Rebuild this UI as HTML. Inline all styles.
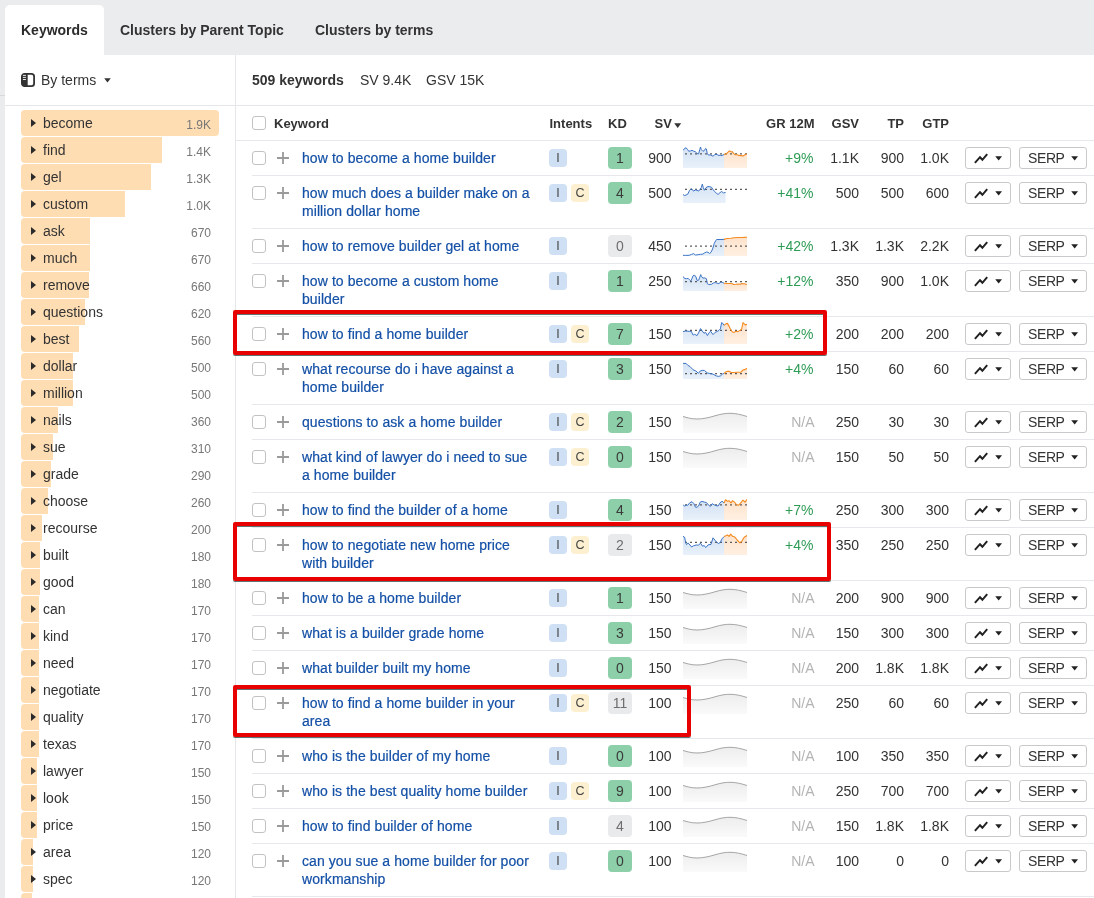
<!DOCTYPE html>
<html lang="en">
<head>
<meta charset="utf-8">
<title>Keywords</title>
<style>
html,body{margin:0;padding:0}
body{width:1094px;height:898px;position:relative;overflow:hidden;background:#ebecee;font-family:"Liberation Sans",sans-serif;font-size:14px;color:#333}
#app{position:absolute;left:0;top:0;width:1094px;height:898px;overflow:hidden;will-change:transform}
.topbar{position:absolute;left:0;top:0;width:1094px;height:55px;background:#ebecee}
.tab-active{position:absolute;left:5px;top:5px;width:99px;height:50px;background:#fff;border-radius:5px 5px 0 0;font-weight:bold;font-size:14px;line-height:50px;text-indent:16px;color:#2b2b2b}
.tab{position:absolute;top:5px;height:50px;line-height:50px;font-weight:bold;font-size:14px;color:#333;white-space:nowrap}
.t2{left:120px}.t3{left:315px}
.panel{position:absolute;left:5px;top:55px;width:1089px;height:843px;background:#fff}
.leftline{position:absolute;left:0;top:95px;width:5px;height:1px;background:#d8d9db}
.hline{position:absolute;left:5px;top:105px;width:1089px;height:1px;background:#e4e6e9}
.vline{position:absolute;left:235px;top:55px;width:1px;height:843px;background:#e4e6e9}
.byterms{position:absolute;left:21px;top:70px;height:20px;line-height:20px;white-space:nowrap}
.sbicon{position:absolute;left:0;top:3px}
.bt{position:absolute;left:20px;top:0}
.caret{position:absolute;left:82.8px;top:8.3px}
.sum{position:absolute;left:252px;top:70px;line-height:20px;white-space:nowrap}
.sum b{color:#333}
.sum .s1{position:absolute;left:108px}.sum .s2{position:absolute;left:174px}
.term{position:absolute;left:21px;width:198px;height:26px;line-height:26px}
.bar{position:absolute;left:0;top:0;height:26px;background:#ffddb3;border-radius:4px 0 0 4px}
.bar.full{border-radius:4px}
.tri{position:absolute;left:10px;top:9px;border-top:4px solid transparent;border-bottom:4px solid transparent;border-left:5.5px solid #2b2b2b}
.tn{position:absolute;left:22px;top:0;color:#333;white-space:nowrap}
.tv{position:absolute;right:8px;top:1.5px;font-size:12px;color:#777}
.thead{position:absolute;left:236px;top:106px;width:858px;height:34px}
.thead .h{position:absolute;top:1px;line-height:34px;font-weight:bold;font-size:13px;color:#333;white-space:nowrap}
.cb{position:absolute;left:16px;top:10px;width:12px;height:12px;border:1px solid #c2c2c2;border-radius:3px;background:#fff}
.hcb{top:10px}
.hk{left:38px}.hi{left:313.5px}.hkd{left:372px}.hsv{left:418.5px}
.svc{position:absolute;left:438.3px;top:16.6px}
.hgr{right:279.5px}.hgsv{right:235px}.htp{right:190px}.hgtp{right:145px}
.row{position:absolute;left:236px;width:858px;}
.row:before,.lastline{content:"";position:absolute;left:16px;right:0;top:-1px;height:1px;background:#e6e8eb}
.lastline{left:252px;top:896px}
.plus{position:absolute;left:41px;top:11px}
.kw{position:absolute;left:66px;top:8px;line-height:18px;color:#1450a6;-webkit-text-stroke:0.2px #1450a6;white-space:nowrap;letter-spacing:0.08px}
.int{position:absolute;top:8px;width:18px;height:18px;line-height:18px;border-radius:4px;text-align:center;font-size:12.5px;color:#444}
.int.i{left:313px;background:#cfe0f5}
.int.c{left:335px;background:#fdf0d0}
.kd{position:absolute;left:372px;top:6px;width:24px;height:22px;line-height:22px;border-radius:4px;text-align:center;font-size:14px;color:#3a3a3a}
.kd.g{background:#8ccfa8}
.kd.gy{background:#e9eaec;color:#6e6e6e}
.n{position:absolute;top:8px;line-height:18px;white-space:nowrap;color:#333}
.sv{right:422.5px}
.spark{position:absolute;left:447px;top:5px;width:64px;height:22px}
.gr{right:280.6px;color:#2e9c55}
.gr.na{color:#b4b4b4;right:279.5px}
.gsv{right:235px}.tp{right:190px}.gtp{right:145px}
.btn{position:absolute;top:6px;height:20px;border:1px solid #c9c9c9;border-radius:3px;background:#fff;line-height:20px;font-size:14px;color:#333;box-sizing:content-box}
.b1{left:729px;width:43.5px}
.b1 .ic{position:absolute;left:8px;top:5px}
.b2{left:783px;width:65.5px;text-indent:8px;letter-spacing:-0.4px}
.bc{position:absolute;right:7.5px;top:8.3px}
.red{position:absolute;border:4px solid #e80000;box-sizing:border-box;border-radius:2px;box-shadow:0 1px 0 rgba(55,80,80,0.8), inset 0 1px 0 rgba(55,80,80,0.8)}

.hbot{position:absolute;left:236px;top:140px;width:858px;height:1px;background:#e6e8eb}

</style>
</head>
<body>
<div id="app">
<svg width="0" height="0" style="position:absolute"><defs><linearGradient id="gb" x1="0" y1="0" x2="0" y2="1"><stop offset="0" stop-color="#d3e2f5"/><stop offset="1" stop-color="#e9f1fa"/></linearGradient><linearGradient id="go" x1="0" y1="0" x2="0" y2="1"><stop offset="0" stop-color="#fee2cb"/><stop offset="1" stop-color="#fff0e2"/></linearGradient><linearGradient id="gn" x1="0" y1="0" x2="0" y2="1"><stop offset="0" stop-color="#ededed"/><stop offset="1" stop-color="#fafafa"/></linearGradient></defs></svg>
<div class="topbar"></div>
<div class="tab-active">Keywords</div>
<div class="tab t2">Clusters by Parent Topic</div>
<div class="tab t3">Clusters by terms</div>
<div class="panel"></div>
<div class="leftline"></div>
<div class="hline"></div>
<div class="vline"></div>
<div class="byterms"><svg class="sbicon" width="14" height="14" viewBox="0 0 14 14"><rect x="0.9" y="0.9" width="12.2" height="12.2" rx="2.6" fill="none" stroke="#333" stroke-width="1.8"/><path d="M1 3 Q1 1 3 1 H6.7 V13 H3 Q1 13 1 11 Z" fill="#333"/><rect x="1.9" y="1.9" width="3" height="0.9" fill="#fff"/><rect x="1.9" y="3.9" width="3" height="0.9" fill="#fff"/><rect x="1.9" y="6" width="3" height="0.9" fill="#fff"/></svg><span class="bt">By terms</span><svg class="caret" width="7" height="4.6" viewBox="0 0 10 6" preserveAspectRatio="none"><path d="M0.3 0.2 H9.7 L5 6 Z" fill="#333"/></svg></div>
<div class="sum"><b>509 keywords</b><span class="s1">SV 9.4K</span><span class="s2">GSV 15K</span></div>
<div class="terms">
<div class="term" style="top:110px"><div class="bar full" style="width:198px"></div><span class="tri"></span><span class="tn">become</span><span class="tv">1.9K</span></div>
<div class="term" style="top:137px"><div class="bar" style="width:141px"></div><span class="tri"></span><span class="tn">find</span><span class="tv">1.4K</span></div>
<div class="term" style="top:164px"><div class="bar" style="width:130px"></div><span class="tri"></span><span class="tn">gel</span><span class="tv">1.3K</span></div>
<div class="term" style="top:191px"><div class="bar" style="width:104px"></div><span class="tri"></span><span class="tn">custom</span><span class="tv">1.0K</span></div>
<div class="term" style="top:218px"><div class="bar" style="width:69px"></div><span class="tri"></span><span class="tn">ask</span><span class="tv">670</span></div>
<div class="term" style="top:245px"><div class="bar" style="width:69px"></div><span class="tri"></span><span class="tn">much</span><span class="tv">670</span></div>
<div class="term" style="top:272px"><div class="bar" style="width:68px"></div><span class="tri"></span><span class="tn">remove</span><span class="tv">660</span></div>
<div class="term" style="top:299px"><div class="bar" style="width:64px"></div><span class="tri"></span><span class="tn">questions</span><span class="tv">620</span></div>
<div class="term" style="top:326px"><div class="bar" style="width:58px"></div><span class="tri"></span><span class="tn">best</span><span class="tv">560</span></div>
<div class="term" style="top:353px"><div class="bar" style="width:52px"></div><span class="tri"></span><span class="tn">dollar</span><span class="tv">500</span></div>
<div class="term" style="top:380px"><div class="bar" style="width:52px"></div><span class="tri"></span><span class="tn">million</span><span class="tv">500</span></div>
<div class="term" style="top:407px"><div class="bar" style="width:37px"></div><span class="tri"></span><span class="tn">nails</span><span class="tv">360</span></div>
<div class="term" style="top:434px"><div class="bar" style="width:32px"></div><span class="tri"></span><span class="tn">sue</span><span class="tv">310</span></div>
<div class="term" style="top:461px"><div class="bar" style="width:30px"></div><span class="tri"></span><span class="tn">grade</span><span class="tv">290</span></div>
<div class="term" style="top:488px"><div class="bar" style="width:27px"></div><span class="tri"></span><span class="tn">choose</span><span class="tv">260</span></div>
<div class="term" style="top:515px"><div class="bar" style="width:21px"></div><span class="tri"></span><span class="tn">recourse</span><span class="tv">200</span></div>
<div class="term" style="top:542px"><div class="bar" style="width:19px"></div><span class="tri"></span><span class="tn">built</span><span class="tv">180</span></div>
<div class="term" style="top:569px"><div class="bar" style="width:19px"></div><span class="tri"></span><span class="tn">good</span><span class="tv">180</span></div>
<div class="term" style="top:596px"><div class="bar" style="width:18px"></div><span class="tri"></span><span class="tn">can</span><span class="tv">170</span></div>
<div class="term" style="top:623px"><div class="bar" style="width:18px"></div><span class="tri"></span><span class="tn">kind</span><span class="tv">170</span></div>
<div class="term" style="top:650px"><div class="bar" style="width:18px"></div><span class="tri"></span><span class="tn">need</span><span class="tv">170</span></div>
<div class="term" style="top:677px"><div class="bar" style="width:18px"></div><span class="tri"></span><span class="tn">negotiate</span><span class="tv">170</span></div>
<div class="term" style="top:704px"><div class="bar" style="width:18px"></div><span class="tri"></span><span class="tn">quality</span><span class="tv">170</span></div>
<div class="term" style="top:731px"><div class="bar" style="width:18px"></div><span class="tri"></span><span class="tn">texas</span><span class="tv">170</span></div>
<div class="term" style="top:758px"><div class="bar" style="width:16px"></div><span class="tri"></span><span class="tn">lawyer</span><span class="tv">150</span></div>
<div class="term" style="top:785px"><div class="bar" style="width:16px"></div><span class="tri"></span><span class="tn">look</span><span class="tv">150</span></div>
<div class="term" style="top:812px"><div class="bar" style="width:16px"></div><span class="tri"></span><span class="tn">price</span><span class="tv">150</span></div>
<div class="term" style="top:839px"><div class="bar" style="width:12px"></div><span class="tri"></span><span class="tn">area</span><span class="tv">120</span></div>
<div class="term" style="top:866px"><div class="bar" style="width:12px"></div><span class="tri"></span><span class="tn">spec</span><span class="tv">120</span></div>
<div class="term" style="top:893px"><div class="bar" style="width:11px"></div><span class="tri"></span><span class="tn"></span><span class="tv"></span></div>
</div>
<div class="thead"><span class="cb hcb"></span><span class="h hk">Keyword</span><span class="h hi">Intents</span><span class="h hkd">KD</span><span class="h hsv">SV</span><svg class="svc" width="7.4" height="5" viewBox="0 0 10 6" preserveAspectRatio="none"><path d="M0.3 0.2 H9.7 L5 6 Z" fill="#333"/></svg><span class="h hgr">GR 12M</span><span class="h hgsv">GSV</span><span class="h htp">TP</span><span class="h hgtp">GTP</span></div>
<div class="row" style="top:141px;height:34px"><span class="cb"></span><svg class="plus" width="12" height="12" viewBox="0 0 12 12"><path d="M6 0V12M0 6H12" stroke="#9a9a9a" stroke-width="1.8" fill="none"/></svg><a class="kw">how to become a home builder</a><span class="int i">I</span><span class="kd g">1</span><span class="n sv">900</span><span class="spark"><svg width="64" height="22" viewBox="0 0 64 22"><polygon points="0,4.5 1.6,2.4 3.1,1.8 4.7,3.7 5.8,5.3 7.4,4.9 9,4.4 10.5,5.1 12.5,5.7 14,7.6 15.6,7.9 16.8,3.4 17.5,1 18.3,3.7 19.9,5.3 21.4,4.5 22.6,2.4 23.4,3 24.2,7.3 25.3,9 27.7,9 30,10.2 31.6,8.8 33.1,8.3 35.1,9.2 37.4,9.4 39,9.6 41,8.4 41,22 0,22" fill="url(#gb)"/><polygon points="41,8.4 43.3,7.9 44.8,6.3 46.4,4.9 48,5.7 49.5,5.9 50.7,7.6 52.2,8.7 54.2,8.8 55.7,9.4 58.1,9.6 60,10 62,8.8 64,8 64,22 41,22" fill="url(#go)"/><path d="M2 7.9H64" stroke="#5c5c5c" stroke-width="1.25" stroke-dasharray="2 3" fill="none"/><polyline points="0,4.5 1.6,2.4 3.1,1.8 4.7,3.7 5.8,5.3 7.4,4.9 9,4.4 10.5,5.1 12.5,5.7 14,7.6 15.6,7.9 16.8,3.4 17.5,1 18.3,3.7 19.9,5.3 21.4,4.5 22.6,2.4 23.4,3 24.2,7.3 25.3,9 27.7,9 30,10.2 31.6,8.8 33.1,8.3 35.1,9.2 37.4,9.4 39,9.6 41,8.4" fill="none" stroke="#3d74c5" stroke-width="1" stroke-linejoin="round"/><polyline points="41,8.4 43.3,7.9 44.8,6.3 46.4,4.9 48,5.7 49.5,5.9 50.7,7.6 52.2,8.7 54.2,8.8 55.7,9.4 58.1,9.6 60,10 62,8.8 64,8" fill="none" stroke="#f58a1f" stroke-width="1.1" stroke-linejoin="round"/></svg></span><span class="n gr">+9%</span><span class="n gsv">1.1K</span><span class="n tp">900</span><span class="n gtp">1.0K</span><span class="btn b1"><svg class="ic" width="14" height="11" viewBox="0 0 14 11"><path d="M0.9 9.8 L6 4.2 L8.4 6.8 L13.2 1.2" fill="none" stroke="#222" stroke-width="2" stroke-linejoin="miter"/></svg><svg class="bc" width="7.4" height="4.5" viewBox="0 0 10 6" preserveAspectRatio="none"><path d="M0.3 0.2 H9.7 L5 6 Z" fill="#222"/></svg></span><span class="btn b2">SERP<svg class="bc" width="7.4" height="4.5" viewBox="0 0 10 6" preserveAspectRatio="none"><path d="M0.3 0.2 H9.7 L5 6 Z" fill="#222"/></svg></span></div>
<div class="row" style="top:176px;height:52px"><span class="cb"></span><svg class="plus" width="12" height="12" viewBox="0 0 12 12"><path d="M6 0V12M0 6H12" stroke="#9a9a9a" stroke-width="1.8" fill="none"/></svg><a class="kw">how much does a builder make on a<br>million dollar home</a><span class="int i">I</span><span class="int c">C</span><span class="kd g">4</span><span class="n sv">500</span><span class="spark"><svg width="64" height="22" viewBox="0 0 64 22"><polygon points="0,13.6 1.6,14.5 3.1,14 4.7,13.2 6.6,9.3 8.2,7.7 9.4,8.5 10.5,10.1 12.5,8.9 14,9.3 15.6,10.1 17.2,8.1 18.3,6.6 19.3,3.1 20.3,6.6 21.4,9.3 23,6.6 25,5.5 26.9,5.8 28.5,6.2 30,8.5 31.6,10.5 33.5,12.3 35.1,13.4 37,11.6 38.6,10.5 40.5,11.9 42.6,11.4 42.6,22 0,22" fill="url(#gb)"/><path d="M2 8.3H64" stroke="#5c5c5c" stroke-width="1.25" stroke-dasharray="2 3" fill="none"/><polyline points="0,13.6 1.6,14.5 3.1,14 4.7,13.2 6.6,9.3 8.2,7.7 9.4,8.5 10.5,10.1 12.5,8.9 14,9.3 15.6,10.1 17.2,8.1 18.3,6.6 19.3,3.1 20.3,6.6 21.4,9.3 23,6.6 25,5.5 26.9,5.8 28.5,6.2 30,8.5 31.6,10.5 33.5,12.3 35.1,13.4 37,11.6 38.6,10.5 40.5,11.9 42.6,11.4" fill="none" stroke="#3d74c5" stroke-width="1" stroke-linejoin="round"/></svg></span><span class="n gr">+41%</span><span class="n gsv">500</span><span class="n tp">500</span><span class="n gtp">600</span><span class="btn b1"><svg class="ic" width="14" height="11" viewBox="0 0 14 11"><path d="M0.9 9.8 L6 4.2 L8.4 6.8 L13.2 1.2" fill="none" stroke="#222" stroke-width="2" stroke-linejoin="miter"/></svg><svg class="bc" width="7.4" height="4.5" viewBox="0 0 10 6" preserveAspectRatio="none"><path d="M0.3 0.2 H9.7 L5 6 Z" fill="#222"/></svg></span><span class="btn b2">SERP<svg class="bc" width="7.4" height="4.5" viewBox="0 0 10 6" preserveAspectRatio="none"><path d="M0.3 0.2 H9.7 L5 6 Z" fill="#222"/></svg></span></div>
<div class="row" style="top:229px;height:34px"><span class="cb"></span><svg class="plus" width="12" height="12" viewBox="0 0 12 12"><path d="M6 0V12M0 6H12" stroke="#9a9a9a" stroke-width="1.8" fill="none"/></svg><a class="kw">how to remove builder gel at home</a><span class="int i">I</span><span class="kd gy">0</span><span class="n sv">450</span><span class="spark"><svg width="64" height="22" viewBox="0 0 64 22"><polygon points="0,21.3 2.7,21.4 6.2,21.3 8.6,20.4 10.5,19.6 12.5,21 15.2,20.7 17.5,20.3 19.9,20.1 21.8,18.8 23.4,18 25,18.3 26.5,19.5 28,18.3 29.6,15 31.2,9.6 32.7,6.5 33.9,5.5 37,5.5 41,5.4 41,22 0,22" fill="url(#gb)"/><polygon points="41,5.4 44,4.5 48,4.3 51,3.7 55.7,3.5 60.4,3.4 64,3.2 64,22 41,22" fill="url(#go)"/><path d="M2 12.1H64" stroke="#5c5c5c" stroke-width="1.25" stroke-dasharray="2 3" fill="none"/><polyline points="0,21.3 2.7,21.4 6.2,21.3 8.6,20.4 10.5,19.6 12.5,21 15.2,20.7 17.5,20.3 19.9,20.1 21.8,18.8 23.4,18 25,18.3 26.5,19.5 28,18.3 29.6,15 31.2,9.6 32.7,6.5 33.9,5.5 37,5.5 41,5.4" fill="none" stroke="#3d74c5" stroke-width="1" stroke-linejoin="round"/><polyline points="41,5.4 44,4.5 48,4.3 51,3.7 55.7,3.5 60.4,3.4 64,3.2" fill="none" stroke="#f58a1f" stroke-width="1.1" stroke-linejoin="round"/></svg></span><span class="n gr">+42%</span><span class="n gsv">1.3K</span><span class="n tp">1.3K</span><span class="n gtp">2.2K</span><span class="btn b1"><svg class="ic" width="14" height="11" viewBox="0 0 14 11"><path d="M0.9 9.8 L6 4.2 L8.4 6.8 L13.2 1.2" fill="none" stroke="#222" stroke-width="2" stroke-linejoin="miter"/></svg><svg class="bc" width="7.4" height="4.5" viewBox="0 0 10 6" preserveAspectRatio="none"><path d="M0.3 0.2 H9.7 L5 6 Z" fill="#222"/></svg></span><span class="btn b2">SERP<svg class="bc" width="7.4" height="4.5" viewBox="0 0 10 6" preserveAspectRatio="none"><path d="M0.3 0.2 H9.7 L5 6 Z" fill="#222"/></svg></span></div>
<div class="row" style="top:264px;height:52px"><span class="cb"></span><svg class="plus" width="12" height="12" viewBox="0 0 12 12"><path d="M6 0V12M0 6H12" stroke="#9a9a9a" stroke-width="1.8" fill="none"/></svg><a class="kw">how to become a custom home<br>builder</a><span class="int i">I</span><span class="kd g">1</span><span class="n sv">250</span><span class="spark"><svg width="64" height="22" viewBox="0 0 64 22"><polygon points="0,7.3 1.6,9.5 3.5,9.7 5.1,9.3 6.6,10.9 7.8,12 9,9.3 10.1,6.7 11.7,6.2 13,8 14,11.4 15.6,11.2 16.8,8.1 17.7,5.6 18.7,7.7 19.9,9.1 21.8,8.9 23.4,9.7 24.4,14.8 25.7,15.5 28.5,15.3 30.4,14 32.4,13.6 33.9,14.2 35.9,14.5 37.8,13.2 39.4,13.4 41,14.2 41,22 0,22" fill="url(#gb)"/><polygon points="41,14.2 44,14.5 48.7,14.5 50.7,15.5 53,15.3 55.4,15 57.3,15.3 58.9,14.5 61.2,14.8 64,15.5 64,22 41,22" fill="url(#go)"/><path d="M2 12.6H64" stroke="#5c5c5c" stroke-width="1.25" stroke-dasharray="2 3" fill="none"/><polyline points="0,7.3 1.6,9.5 3.5,9.7 5.1,9.3 6.6,10.9 7.8,12 9,9.3 10.1,6.7 11.7,6.2 13,8 14,11.4 15.6,11.2 16.8,8.1 17.7,5.6 18.7,7.7 19.9,9.1 21.8,8.9 23.4,9.7 24.4,14.8 25.7,15.5 28.5,15.3 30.4,14 32.4,13.6 33.9,14.2 35.9,14.5 37.8,13.2 39.4,13.4 41,14.2" fill="none" stroke="#3d74c5" stroke-width="1" stroke-linejoin="round"/><polyline points="41,14.2 44,14.5 48.7,14.5 50.7,15.5 53,15.3 55.4,15 57.3,15.3 58.9,14.5 61.2,14.8 64,15.5" fill="none" stroke="#f58a1f" stroke-width="1.1" stroke-linejoin="round"/></svg></span><span class="n gr">+12%</span><span class="n gsv">350</span><span class="n tp">900</span><span class="n gtp">1.0K</span><span class="btn b1"><svg class="ic" width="14" height="11" viewBox="0 0 14 11"><path d="M0.9 9.8 L6 4.2 L8.4 6.8 L13.2 1.2" fill="none" stroke="#222" stroke-width="2" stroke-linejoin="miter"/></svg><svg class="bc" width="7.4" height="4.5" viewBox="0 0 10 6" preserveAspectRatio="none"><path d="M0.3 0.2 H9.7 L5 6 Z" fill="#222"/></svg></span><span class="btn b2">SERP<svg class="bc" width="7.4" height="4.5" viewBox="0 0 10 6" preserveAspectRatio="none"><path d="M0.3 0.2 H9.7 L5 6 Z" fill="#222"/></svg></span></div>
<div class="row" style="top:317px;height:34px"><span class="cb"></span><svg class="plus" width="12" height="12" viewBox="0 0 12 12"><path d="M6 0V12M0 6H12" stroke="#9a9a9a" stroke-width="1.8" fill="none"/></svg><a class="kw">how to find a home builder</a><span class="int i">I</span><span class="int c">C</span><span class="kd g">7</span><span class="n sv">150</span><span class="spark"><svg width="64" height="22" viewBox="0 0 64 22"><polygon points="0,9.6 2.7,9 6.2,9.4 8.2,9.2 10.1,13.1 11.7,12.3 14,13.6 16,10 17.5,6.5 19.1,8.8 21,11.3 22.6,10.4 24.4,13.6 26.1,10.8 27.5,9.2 30,12.6 32,10.4 33.9,9.6 35.9,8.4 37.4,6.9 38.6,0.6 39.8,1.4 41,3.4 41,22 0,22" fill="url(#gb)"/><polygon points="41,3.4 42.9,1.8 44.4,1.4 46,4.1 47.6,7.6 49.5,10 51.1,10.4 53,9.2 55,9.6 57,8.4 58.5,7.6 60,0.6 61.2,1.8 62.6,3 64,2.2 64,22 41,22" fill="url(#go)"/><path d="M2 8.4H64" stroke="#5c5c5c" stroke-width="1.25" stroke-dasharray="2 3" fill="none"/><polyline points="0,9.6 2.7,9 6.2,9.4 8.2,9.2 10.1,13.1 11.7,12.3 14,13.6 16,10 17.5,6.5 19.1,8.8 21,11.3 22.6,10.4 24.4,13.6 26.1,10.8 27.5,9.2 30,12.6 32,10.4 33.9,9.6 35.9,8.4 37.4,6.9 38.6,0.6 39.8,1.4 41,3.4" fill="none" stroke="#3d74c5" stroke-width="1" stroke-linejoin="round"/><polyline points="41,3.4 42.9,1.8 44.4,1.4 46,4.1 47.6,7.6 49.5,10 51.1,10.4 53,9.2 55,9.6 57,8.4 58.5,7.6 60,0.6 61.2,1.8 62.6,3 64,2.2" fill="none" stroke="#f58a1f" stroke-width="1.1" stroke-linejoin="round"/></svg></span><span class="n gr">+2%</span><span class="n gsv">200</span><span class="n tp">200</span><span class="n gtp">200</span><span class="btn b1"><svg class="ic" width="14" height="11" viewBox="0 0 14 11"><path d="M0.9 9.8 L6 4.2 L8.4 6.8 L13.2 1.2" fill="none" stroke="#222" stroke-width="2" stroke-linejoin="miter"/></svg><svg class="bc" width="7.4" height="4.5" viewBox="0 0 10 6" preserveAspectRatio="none"><path d="M0.3 0.2 H9.7 L5 6 Z" fill="#222"/></svg></span><span class="btn b2">SERP<svg class="bc" width="7.4" height="4.5" viewBox="0 0 10 6" preserveAspectRatio="none"><path d="M0.3 0.2 H9.7 L5 6 Z" fill="#222"/></svg></span></div>
<div class="row" style="top:352px;height:52px"><span class="cb"></span><svg class="plus" width="12" height="12" viewBox="0 0 12 12"><path d="M6 0V12M0 6H12" stroke="#9a9a9a" stroke-width="1.8" fill="none"/></svg><a class="kw">what recourse do i have against a<br>home builder</a><span class="int i">I</span><span class="kd g">3</span><span class="n sv">150</span><span class="spark"><svg width="64" height="22" viewBox="0 0 64 22"><polygon points="0,6.4 3.1,6.4 5.1,8.5 7,9.5 10.1,12.8 12.9,14 15.4,16.3 17.2,14 19.1,13.4 21.4,13.4 24.2,15.9 26.9,16.5 30,17.1 33.1,18.9 35.5,19.4 37.4,18.9 39.4,17.1 41,16.5 41,22 0,22" fill="url(#gb)"/><polygon points="41,16.5 42.9,14.8 44.8,14.2 46.4,14.4 48.3,15.5 51.1,15.5 54.2,15.3 57.7,15.3 60,13 62.4,12.4 64,11.2 64,22 41,22" fill="url(#go)"/><path d="M2 16.5H64" stroke="#5c5c5c" stroke-width="1.25" stroke-dasharray="2 3" fill="none"/><polyline points="0,6.4 3.1,6.4 5.1,8.5 7,9.5 10.1,12.8 12.9,14 15.4,16.3 17.2,14 19.1,13.4 21.4,13.4 24.2,15.9 26.9,16.5 30,17.1 33.1,18.9 35.5,19.4 37.4,18.9 39.4,17.1 41,16.5" fill="none" stroke="#3d74c5" stroke-width="1" stroke-linejoin="round"/><polyline points="41,16.5 42.9,14.8 44.8,14.2 46.4,14.4 48.3,15.5 51.1,15.5 54.2,15.3 57.7,15.3 60,13 62.4,12.4 64,11.2" fill="none" stroke="#f58a1f" stroke-width="1.1" stroke-linejoin="round"/></svg></span><span class="n gr">+4%</span><span class="n gsv">150</span><span class="n tp">60</span><span class="n gtp">60</span><span class="btn b1"><svg class="ic" width="14" height="11" viewBox="0 0 14 11"><path d="M0.9 9.8 L6 4.2 L8.4 6.8 L13.2 1.2" fill="none" stroke="#222" stroke-width="2" stroke-linejoin="miter"/></svg><svg class="bc" width="7.4" height="4.5" viewBox="0 0 10 6" preserveAspectRatio="none"><path d="M0.3 0.2 H9.7 L5 6 Z" fill="#222"/></svg></span><span class="btn b2">SERP<svg class="bc" width="7.4" height="4.5" viewBox="0 0 10 6" preserveAspectRatio="none"><path d="M0.3 0.2 H9.7 L5 6 Z" fill="#222"/></svg></span></div>
<div class="row" style="top:405px;height:34px"><span class="cb"></span><svg class="plus" width="12" height="12" viewBox="0 0 12 12"><path d="M6 0V12M0 6H12" stroke="#9a9a9a" stroke-width="1.8" fill="none"/></svg><a class="kw">questions to ask a home builder</a><span class="int i">I</span><span class="int c">C</span><span class="kd g">2</span><span class="n sv">150</span><span class="spark"><svg width="64" height="23" viewBox="0 0 64 23"><path d="M0 6.5 C4 7.6 8 9 14 9 C20 9 26 7.6 32 5.8 C38 4 42 3.3 47 3.3 C53 3.3 58 4.6 64 6.5 V23 H0Z" fill="url(#gn)"/><path d="M0 6.5 C4 7.6 8 9 14 9 C20 9 26 7.6 32 5.8 C38 4 42 3.3 47 3.3 C53 3.3 58 4.6 64 6.5" fill="none" stroke="#a6a6a6" stroke-width="1"/></svg></span><span class="n gr na">N/A</span><span class="n gsv">250</span><span class="n tp">30</span><span class="n gtp">30</span><span class="btn b1"><svg class="ic" width="14" height="11" viewBox="0 0 14 11"><path d="M0.9 9.8 L6 4.2 L8.4 6.8 L13.2 1.2" fill="none" stroke="#222" stroke-width="2" stroke-linejoin="miter"/></svg><svg class="bc" width="7.4" height="4.5" viewBox="0 0 10 6" preserveAspectRatio="none"><path d="M0.3 0.2 H9.7 L5 6 Z" fill="#222"/></svg></span><span class="btn b2">SERP<svg class="bc" width="7.4" height="4.5" viewBox="0 0 10 6" preserveAspectRatio="none"><path d="M0.3 0.2 H9.7 L5 6 Z" fill="#222"/></svg></span></div>
<div class="row" style="top:440px;height:52px"><span class="cb"></span><svg class="plus" width="12" height="12" viewBox="0 0 12 12"><path d="M6 0V12M0 6H12" stroke="#9a9a9a" stroke-width="1.8" fill="none"/></svg><a class="kw">what kind of lawyer do i need to sue<br>a home builder</a><span class="int i">I</span><span class="int c">C</span><span class="kd g">0</span><span class="n sv">150</span><span class="spark"><svg width="64" height="23" viewBox="0 0 64 23"><path d="M0 6.5 C4 7.6 8 9 14 9 C20 9 26 7.6 32 5.8 C38 4 42 3.3 47 3.3 C53 3.3 58 4.6 64 6.5 V23 H0Z" fill="url(#gn)"/><path d="M0 6.5 C4 7.6 8 9 14 9 C20 9 26 7.6 32 5.8 C38 4 42 3.3 47 3.3 C53 3.3 58 4.6 64 6.5" fill="none" stroke="#a6a6a6" stroke-width="1"/></svg></span><span class="n gr na">N/A</span><span class="n gsv">150</span><span class="n tp">50</span><span class="n gtp">50</span><span class="btn b1"><svg class="ic" width="14" height="11" viewBox="0 0 14 11"><path d="M0.9 9.8 L6 4.2 L8.4 6.8 L13.2 1.2" fill="none" stroke="#222" stroke-width="2" stroke-linejoin="miter"/></svg><svg class="bc" width="7.4" height="4.5" viewBox="0 0 10 6" preserveAspectRatio="none"><path d="M0.3 0.2 H9.7 L5 6 Z" fill="#222"/></svg></span><span class="btn b2">SERP<svg class="bc" width="7.4" height="4.5" viewBox="0 0 10 6" preserveAspectRatio="none"><path d="M0.3 0.2 H9.7 L5 6 Z" fill="#222"/></svg></span></div>
<div class="row" style="top:493px;height:34px"><span class="cb"></span><svg class="plus" width="12" height="12" viewBox="0 0 12 12"><path d="M6 0V12M0 6H12" stroke="#9a9a9a" stroke-width="1.8" fill="none"/></svg><a class="kw">how to find the builder of a home</a><span class="int i">I</span><span class="kd g">4</span><span class="n sv">150</span><span class="spark"><svg width="64" height="22" viewBox="0 0 64 22"><polygon points="0,6.5 1.6,8.3 3.1,6.9 4.7,7.4 6.6,4.9 9,3.7 10.9,5.7 12.5,9.2 14,9.2 15.6,8 17.2,4.1 19.1,3.4 21.4,4.1 23.4,4.5 25.3,6.9 27.3,8.4 29.2,5.7 31.2,6.9 33.1,7.6 35.1,8 37,4.9 39,3.2 41,4.9 41,22 0,22" fill="url(#gb)"/><polygon points="41,4.9 42.5,1.8 44.4,3.2 46,2.7 48,4.9 49.5,2.7 51.5,4.1 53.4,6.5 55.4,7.3 57.3,5.3 60,2.2 62,4.1 64,1.4 64,22 41,22" fill="url(#go)"/><path d="M2 6.9H64" stroke="#5c5c5c" stroke-width="1.25" stroke-dasharray="2 3" fill="none"/><polyline points="0,6.5 1.6,8.3 3.1,6.9 4.7,7.4 6.6,4.9 9,3.7 10.9,5.7 12.5,9.2 14,9.2 15.6,8 17.2,4.1 19.1,3.4 21.4,4.1 23.4,4.5 25.3,6.9 27.3,8.4 29.2,5.7 31.2,6.9 33.1,7.6 35.1,8 37,4.9 39,3.2 41,4.9" fill="none" stroke="#3d74c5" stroke-width="1" stroke-linejoin="round"/><polyline points="41,4.9 42.5,1.8 44.4,3.2 46,2.7 48,4.9 49.5,2.7 51.5,4.1 53.4,6.5 55.4,7.3 57.3,5.3 60,2.2 62,4.1 64,1.4" fill="none" stroke="#f58a1f" stroke-width="1.1" stroke-linejoin="round"/></svg></span><span class="n gr">+7%</span><span class="n gsv">250</span><span class="n tp">300</span><span class="n gtp">300</span><span class="btn b1"><svg class="ic" width="14" height="11" viewBox="0 0 14 11"><path d="M0.9 9.8 L6 4.2 L8.4 6.8 L13.2 1.2" fill="none" stroke="#222" stroke-width="2" stroke-linejoin="miter"/></svg><svg class="bc" width="7.4" height="4.5" viewBox="0 0 10 6" preserveAspectRatio="none"><path d="M0.3 0.2 H9.7 L5 6 Z" fill="#222"/></svg></span><span class="btn b2">SERP<svg class="bc" width="7.4" height="4.5" viewBox="0 0 10 6" preserveAspectRatio="none"><path d="M0.3 0.2 H9.7 L5 6 Z" fill="#222"/></svg></span></div>
<div class="row" style="top:528px;height:52px"><span class="cb"></span><svg class="plus" width="12" height="12" viewBox="0 0 12 12"><path d="M6 0V12M0 6H12" stroke="#9a9a9a" stroke-width="1.8" fill="none"/></svg><a class="kw">how to negotiate new home price<br>with builder</a><span class="int i">I</span><span class="int c">C</span><span class="kd gy">2</span><span class="n sv">150</span><span class="spark"><svg width="64" height="22" viewBox="0 0 64 22"><polygon points="0,3.4 1.6,4.2 2.7,9.7 3.5,11.6 5.1,10.1 7,12 8.6,14 10.5,12.8 13.2,12 15.6,12.2 17.5,10.1 19.5,13.2 21,12.6 23,14.5 25,11.9 28,11.4 30,4.8 32,7.2 33.9,9.3 35.5,10.5 37.4,9.3 39,5.8 41,3.6 41,22 0,22" fill="url(#gb)"/><polygon points="41,3.6 42.9,2.8 44.4,2 46,3.3 47.8,1.1 49.5,3.3 51.9,4.1 54.2,7 56.9,9.8 58.9,8.1 61.2,4.2 64,2.5 64,22 41,22" fill="url(#go)"/><path d="M2 9.3H64" stroke="#5c5c5c" stroke-width="1.25" stroke-dasharray="2 3" fill="none"/><polyline points="0,3.4 1.6,4.2 2.7,9.7 3.5,11.6 5.1,10.1 7,12 8.6,14 10.5,12.8 13.2,12 15.6,12.2 17.5,10.1 19.5,13.2 21,12.6 23,14.5 25,11.9 28,11.4 30,4.8 32,7.2 33.9,9.3 35.5,10.5 37.4,9.3 39,5.8 41,3.6" fill="none" stroke="#3d74c5" stroke-width="1" stroke-linejoin="round"/><polyline points="41,3.6 42.9,2.8 44.4,2 46,3.3 47.8,1.1 49.5,3.3 51.9,4.1 54.2,7 56.9,9.8 58.9,8.1 61.2,4.2 64,2.5" fill="none" stroke="#f58a1f" stroke-width="1.1" stroke-linejoin="round"/></svg></span><span class="n gr">+4%</span><span class="n gsv">350</span><span class="n tp">250</span><span class="n gtp">250</span><span class="btn b1"><svg class="ic" width="14" height="11" viewBox="0 0 14 11"><path d="M0.9 9.8 L6 4.2 L8.4 6.8 L13.2 1.2" fill="none" stroke="#222" stroke-width="2" stroke-linejoin="miter"/></svg><svg class="bc" width="7.4" height="4.5" viewBox="0 0 10 6" preserveAspectRatio="none"><path d="M0.3 0.2 H9.7 L5 6 Z" fill="#222"/></svg></span><span class="btn b2">SERP<svg class="bc" width="7.4" height="4.5" viewBox="0 0 10 6" preserveAspectRatio="none"><path d="M0.3 0.2 H9.7 L5 6 Z" fill="#222"/></svg></span></div>
<div class="row" style="top:581px;height:34px"><span class="cb"></span><svg class="plus" width="12" height="12" viewBox="0 0 12 12"><path d="M6 0V12M0 6H12" stroke="#9a9a9a" stroke-width="1.8" fill="none"/></svg><a class="kw">how to be a home builder</a><span class="int i">I</span><span class="kd g">1</span><span class="n sv">150</span><span class="spark"><svg width="64" height="23" viewBox="0 0 64 23"><path d="M0 6.5 C4 7.6 8 9 14 9 C20 9 26 7.6 32 5.8 C38 4 42 3.3 47 3.3 C53 3.3 58 4.6 64 6.5 V23 H0Z" fill="url(#gn)"/><path d="M0 6.5 C4 7.6 8 9 14 9 C20 9 26 7.6 32 5.8 C38 4 42 3.3 47 3.3 C53 3.3 58 4.6 64 6.5" fill="none" stroke="#a6a6a6" stroke-width="1"/></svg></span><span class="n gr na">N/A</span><span class="n gsv">200</span><span class="n tp">900</span><span class="n gtp">900</span><span class="btn b1"><svg class="ic" width="14" height="11" viewBox="0 0 14 11"><path d="M0.9 9.8 L6 4.2 L8.4 6.8 L13.2 1.2" fill="none" stroke="#222" stroke-width="2" stroke-linejoin="miter"/></svg><svg class="bc" width="7.4" height="4.5" viewBox="0 0 10 6" preserveAspectRatio="none"><path d="M0.3 0.2 H9.7 L5 6 Z" fill="#222"/></svg></span><span class="btn b2">SERP<svg class="bc" width="7.4" height="4.5" viewBox="0 0 10 6" preserveAspectRatio="none"><path d="M0.3 0.2 H9.7 L5 6 Z" fill="#222"/></svg></span></div>
<div class="row" style="top:616px;height:34px"><span class="cb"></span><svg class="plus" width="12" height="12" viewBox="0 0 12 12"><path d="M6 0V12M0 6H12" stroke="#9a9a9a" stroke-width="1.8" fill="none"/></svg><a class="kw">what is a builder grade home</a><span class="int i">I</span><span class="kd g">3</span><span class="n sv">150</span><span class="spark"><svg width="64" height="23" viewBox="0 0 64 23"><path d="M0 6.5 C4 7.6 8 9 14 9 C20 9 26 7.6 32 5.8 C38 4 42 3.3 47 3.3 C53 3.3 58 4.6 64 6.5 V23 H0Z" fill="url(#gn)"/><path d="M0 6.5 C4 7.6 8 9 14 9 C20 9 26 7.6 32 5.8 C38 4 42 3.3 47 3.3 C53 3.3 58 4.6 64 6.5" fill="none" stroke="#a6a6a6" stroke-width="1"/></svg></span><span class="n gr na">N/A</span><span class="n gsv">150</span><span class="n tp">300</span><span class="n gtp">300</span><span class="btn b1"><svg class="ic" width="14" height="11" viewBox="0 0 14 11"><path d="M0.9 9.8 L6 4.2 L8.4 6.8 L13.2 1.2" fill="none" stroke="#222" stroke-width="2" stroke-linejoin="miter"/></svg><svg class="bc" width="7.4" height="4.5" viewBox="0 0 10 6" preserveAspectRatio="none"><path d="M0.3 0.2 H9.7 L5 6 Z" fill="#222"/></svg></span><span class="btn b2">SERP<svg class="bc" width="7.4" height="4.5" viewBox="0 0 10 6" preserveAspectRatio="none"><path d="M0.3 0.2 H9.7 L5 6 Z" fill="#222"/></svg></span></div>
<div class="row" style="top:651px;height:34px"><span class="cb"></span><svg class="plus" width="12" height="12" viewBox="0 0 12 12"><path d="M6 0V12M0 6H12" stroke="#9a9a9a" stroke-width="1.8" fill="none"/></svg><a class="kw">what builder built my home</a><span class="int i">I</span><span class="kd g">0</span><span class="n sv">150</span><span class="spark"><svg width="64" height="23" viewBox="0 0 64 23"><path d="M0 6.5 C4 7.6 8 9 14 9 C20 9 26 7.6 32 5.8 C38 4 42 3.3 47 3.3 C53 3.3 58 4.6 64 6.5 V23 H0Z" fill="url(#gn)"/><path d="M0 6.5 C4 7.6 8 9 14 9 C20 9 26 7.6 32 5.8 C38 4 42 3.3 47 3.3 C53 3.3 58 4.6 64 6.5" fill="none" stroke="#a6a6a6" stroke-width="1"/></svg></span><span class="n gr na">N/A</span><span class="n gsv">200</span><span class="n tp">1.8K</span><span class="n gtp">1.8K</span><span class="btn b1"><svg class="ic" width="14" height="11" viewBox="0 0 14 11"><path d="M0.9 9.8 L6 4.2 L8.4 6.8 L13.2 1.2" fill="none" stroke="#222" stroke-width="2" stroke-linejoin="miter"/></svg><svg class="bc" width="7.4" height="4.5" viewBox="0 0 10 6" preserveAspectRatio="none"><path d="M0.3 0.2 H9.7 L5 6 Z" fill="#222"/></svg></span><span class="btn b2">SERP<svg class="bc" width="7.4" height="4.5" viewBox="0 0 10 6" preserveAspectRatio="none"><path d="M0.3 0.2 H9.7 L5 6 Z" fill="#222"/></svg></span></div>
<div class="row" style="top:686px;height:52px"><span class="cb"></span><svg class="plus" width="12" height="12" viewBox="0 0 12 12"><path d="M6 0V12M0 6H12" stroke="#9a9a9a" stroke-width="1.8" fill="none"/></svg><a class="kw">how to find a home builder in your<br>area</a><span class="int i">I</span><span class="int c">C</span><span class="kd gy">11</span><span class="n sv">100</span><span class="spark"><svg width="64" height="23" viewBox="0 0 64 23"><path d="M0 6.5 C4 7.6 8 9 14 9 C20 9 26 7.6 32 5.8 C38 4 42 3.3 47 3.3 C53 3.3 58 4.6 64 6.5 V23 H0Z" fill="url(#gn)"/><path d="M0 6.5 C4 7.6 8 9 14 9 C20 9 26 7.6 32 5.8 C38 4 42 3.3 47 3.3 C53 3.3 58 4.6 64 6.5" fill="none" stroke="#a6a6a6" stroke-width="1"/></svg></span><span class="n gr na">N/A</span><span class="n gsv">250</span><span class="n tp">60</span><span class="n gtp">60</span><span class="btn b1"><svg class="ic" width="14" height="11" viewBox="0 0 14 11"><path d="M0.9 9.8 L6 4.2 L8.4 6.8 L13.2 1.2" fill="none" stroke="#222" stroke-width="2" stroke-linejoin="miter"/></svg><svg class="bc" width="7.4" height="4.5" viewBox="0 0 10 6" preserveAspectRatio="none"><path d="M0.3 0.2 H9.7 L5 6 Z" fill="#222"/></svg></span><span class="btn b2">SERP<svg class="bc" width="7.4" height="4.5" viewBox="0 0 10 6" preserveAspectRatio="none"><path d="M0.3 0.2 H9.7 L5 6 Z" fill="#222"/></svg></span></div>
<div class="row" style="top:739px;height:34px"><span class="cb"></span><svg class="plus" width="12" height="12" viewBox="0 0 12 12"><path d="M6 0V12M0 6H12" stroke="#9a9a9a" stroke-width="1.8" fill="none"/></svg><a class="kw">who is the builder of my home</a><span class="int i">I</span><span class="kd g">0</span><span class="n sv">100</span><span class="spark"><svg width="64" height="23" viewBox="0 0 64 23"><path d="M0 6.5 C4 7.6 8 9 14 9 C20 9 26 7.6 32 5.8 C38 4 42 3.3 47 3.3 C53 3.3 58 4.6 64 6.5 V23 H0Z" fill="url(#gn)"/><path d="M0 6.5 C4 7.6 8 9 14 9 C20 9 26 7.6 32 5.8 C38 4 42 3.3 47 3.3 C53 3.3 58 4.6 64 6.5" fill="none" stroke="#a6a6a6" stroke-width="1"/></svg></span><span class="n gr na">N/A</span><span class="n gsv">100</span><span class="n tp">350</span><span class="n gtp">350</span><span class="btn b1"><svg class="ic" width="14" height="11" viewBox="0 0 14 11"><path d="M0.9 9.8 L6 4.2 L8.4 6.8 L13.2 1.2" fill="none" stroke="#222" stroke-width="2" stroke-linejoin="miter"/></svg><svg class="bc" width="7.4" height="4.5" viewBox="0 0 10 6" preserveAspectRatio="none"><path d="M0.3 0.2 H9.7 L5 6 Z" fill="#222"/></svg></span><span class="btn b2">SERP<svg class="bc" width="7.4" height="4.5" viewBox="0 0 10 6" preserveAspectRatio="none"><path d="M0.3 0.2 H9.7 L5 6 Z" fill="#222"/></svg></span></div>
<div class="row" style="top:774px;height:34px"><span class="cb"></span><svg class="plus" width="12" height="12" viewBox="0 0 12 12"><path d="M6 0V12M0 6H12" stroke="#9a9a9a" stroke-width="1.8" fill="none"/></svg><a class="kw">who is the best quality home builder</a><span class="int i">I</span><span class="int c">C</span><span class="kd g">9</span><span class="n sv">100</span><span class="spark"><svg width="64" height="23" viewBox="0 0 64 23"><path d="M0 6.5 C4 7.6 8 9 14 9 C20 9 26 7.6 32 5.8 C38 4 42 3.3 47 3.3 C53 3.3 58 4.6 64 6.5 V23 H0Z" fill="url(#gn)"/><path d="M0 6.5 C4 7.6 8 9 14 9 C20 9 26 7.6 32 5.8 C38 4 42 3.3 47 3.3 C53 3.3 58 4.6 64 6.5" fill="none" stroke="#a6a6a6" stroke-width="1"/></svg></span><span class="n gr na">N/A</span><span class="n gsv">250</span><span class="n tp">700</span><span class="n gtp">700</span><span class="btn b1"><svg class="ic" width="14" height="11" viewBox="0 0 14 11"><path d="M0.9 9.8 L6 4.2 L8.4 6.8 L13.2 1.2" fill="none" stroke="#222" stroke-width="2" stroke-linejoin="miter"/></svg><svg class="bc" width="7.4" height="4.5" viewBox="0 0 10 6" preserveAspectRatio="none"><path d="M0.3 0.2 H9.7 L5 6 Z" fill="#222"/></svg></span><span class="btn b2">SERP<svg class="bc" width="7.4" height="4.5" viewBox="0 0 10 6" preserveAspectRatio="none"><path d="M0.3 0.2 H9.7 L5 6 Z" fill="#222"/></svg></span></div>
<div class="row" style="top:809px;height:34px"><span class="cb"></span><svg class="plus" width="12" height="12" viewBox="0 0 12 12"><path d="M6 0V12M0 6H12" stroke="#9a9a9a" stroke-width="1.8" fill="none"/></svg><a class="kw">how to find builder of home</a><span class="int i">I</span><span class="kd gy">4</span><span class="n sv">100</span><span class="spark"><svg width="64" height="23" viewBox="0 0 64 23"><path d="M0 6.5 C4 7.6 8 9 14 9 C20 9 26 7.6 32 5.8 C38 4 42 3.3 47 3.3 C53 3.3 58 4.6 64 6.5 V23 H0Z" fill="url(#gn)"/><path d="M0 6.5 C4 7.6 8 9 14 9 C20 9 26 7.6 32 5.8 C38 4 42 3.3 47 3.3 C53 3.3 58 4.6 64 6.5" fill="none" stroke="#a6a6a6" stroke-width="1"/></svg></span><span class="n gr na">N/A</span><span class="n gsv">150</span><span class="n tp">1.8K</span><span class="n gtp">1.8K</span><span class="btn b1"><svg class="ic" width="14" height="11" viewBox="0 0 14 11"><path d="M0.9 9.8 L6 4.2 L8.4 6.8 L13.2 1.2" fill="none" stroke="#222" stroke-width="2" stroke-linejoin="miter"/></svg><svg class="bc" width="7.4" height="4.5" viewBox="0 0 10 6" preserveAspectRatio="none"><path d="M0.3 0.2 H9.7 L5 6 Z" fill="#222"/></svg></span><span class="btn b2">SERP<svg class="bc" width="7.4" height="4.5" viewBox="0 0 10 6" preserveAspectRatio="none"><path d="M0.3 0.2 H9.7 L5 6 Z" fill="#222"/></svg></span></div>
<div class="row" style="top:844px;height:52px"><span class="cb"></span><svg class="plus" width="12" height="12" viewBox="0 0 12 12"><path d="M6 0V12M0 6H12" stroke="#9a9a9a" stroke-width="1.8" fill="none"/></svg><a class="kw">can you sue a home builder for poor<br>workmanship</a><span class="int i">I</span><span class="kd g">0</span><span class="n sv">100</span><span class="spark"><svg width="64" height="23" viewBox="0 0 64 23"><path d="M0 6.5 C4 7.6 8 9 14 9 C20 9 26 7.6 32 5.8 C38 4 42 3.3 47 3.3 C53 3.3 58 4.6 64 6.5 V23 H0Z" fill="url(#gn)"/><path d="M0 6.5 C4 7.6 8 9 14 9 C20 9 26 7.6 32 5.8 C38 4 42 3.3 47 3.3 C53 3.3 58 4.6 64 6.5" fill="none" stroke="#a6a6a6" stroke-width="1"/></svg></span><span class="n gr na">N/A</span><span class="n gsv">100</span><span class="n tp">0</span><span class="n gtp">0</span><span class="btn b1"><svg class="ic" width="14" height="11" viewBox="0 0 14 11"><path d="M0.9 9.8 L6 4.2 L8.4 6.8 L13.2 1.2" fill="none" stroke="#222" stroke-width="2" stroke-linejoin="miter"/></svg><svg class="bc" width="7.4" height="4.5" viewBox="0 0 10 6" preserveAspectRatio="none"><path d="M0.3 0.2 H9.7 L5 6 Z" fill="#222"/></svg></span><span class="btn b2">SERP<svg class="bc" width="7.4" height="4.5" viewBox="0 0 10 6" preserveAspectRatio="none"><path d="M0.3 0.2 H9.7 L5 6 Z" fill="#222"/></svg></span></div>
<div class="lastline"></div>
<div class="hbot"></div>
<div class="red" style="left:233px;top:310px;width:594px;height:45px"></div>
<div class="red" style="left:233px;top:522px;width:598px;height:59px"></div>
<div class="red" style="left:233px;top:685px;width:458px;height:52px"></div>
</div>
</body>
</html>
